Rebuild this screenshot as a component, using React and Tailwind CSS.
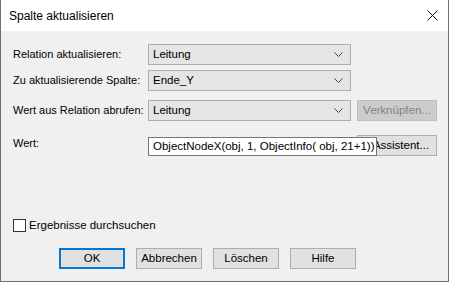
import React from "react";

const font = { fontFamily: '"Liberation Sans", Arial, sans-serif' };

const Chevron = () => (
  <svg width="9" height="5" viewBox="0 0 9 5" className="text-[#404040]">
    <path d="M0.5 0.5 L4.5 4.5 L8.5 0.5" fill="none" stroke="currentColor" strokeWidth="1" />
  </svg>
);

const Dropdown = ({ value }) => (
  <div className="w-[203px] h-[21px] bg-[#e5e5e5] border border-[#adadad] flex items-center justify-between pl-[4px] pr-[7px] text-black">
    <span>{value}</span>
    <Chevron />
  </div>
);

const Label = ({ children }) => (
  <div className="w-[135px] shrink-0 text-black whitespace-nowrap text-[11px]">{children}</div>
);

const Button = ({ children, focused, disabled, className = "" }) => (
  <div
    className={
      "w-[66px] h-[21px] flex items-center justify-center whitespace-nowrap " +
      (focused
        ? "border-2 border-[#0078d7] bg-[#e1e1e1] text-black "
        : disabled
        ? "border border-[#bfbfbf] bg-[#cccccc] text-[#838383] "
        : "border border-[#adadad] bg-[#e1e1e1] text-black ") +
      className
    }
  >
    {children}
  </div>
);

export default function App() {
  return (
    <div className="w-[449px] h-[282px] flex flex-col border-x border-b border-[#6f6f6f] text-[11.5px] leading-none" style={font}>
      <div className="h-[31px] bg-white flex items-center justify-between pl-[8px] pr-[10px] shrink-0">
        <span className="text-[12px] text-black">Spalte aktualisieren</span>
        <svg width="11" height="11" viewBox="0 0 11 11">
          <path d="M0.5 0.5 L10.5 10.5 M10.5 0.5 L0.5 10.5" stroke="#111" strokeWidth="1" />
        </svg>
      </div>
      <div className="flex-1 bg-[#f0f0f0] pl-[12px] pt-[13px] flex flex-col">
        <div className="flex items-center">
          <Label>Relation aktualisieren:</Label>
          <Dropdown value="Leitung" />
        </div>
        <div className="flex items-center mt-[5px]">
          <Label>Zu aktualisierende Spalte:</Label>
          <Dropdown value="Ende_Y" />
        </div>
        <div className="flex items-center mt-[9px]">
          <Label>Wert aus Relation abrufen:</Label>
          <Dropdown value="Leitung" />
          <Button disabled className="ml-[6px] w-[80px]">Verknüpfen...</Button>
        </div>
        <div className="flex items-start mt-[14px] relative">
          <div className="w-[135px] shrink-0 text-black pt-[3px] text-[11px]">Wert:</div>
          <div className="w-[203px] h-[21px]" />
          <Button className="ml-[6px] w-[80px] pl-[8px]">Assistent...</Button>
          <div className="absolute left-[135px] top-[2px] h-[19px] w-[229px] bg-white border border-[#767676] flex items-center pl-[4px] text-black whitespace-nowrap overflow-hidden">
            ObjectNodeX(obj, 1, ObjectInfo( obj, 21+1))
          </div>
        </div>
        <div className="flex items-center mt-[63px]">
          <div className="w-[13px] h-[13px] border border-[#333] bg-white" />
          <span className="ml-[3px] text-black">Ergebnisse durchsuchen</span>
        </div>
        <div className="flex items-center mt-[16px] pl-[46px] gap-[11px]">
          <Button focused>OK</Button>
          <Button>Abbrechen</Button>
          <Button>Löschen</Button>
          <Button>Hilfe</Button>
        </div>
      </div>
    </div>
  );
}
